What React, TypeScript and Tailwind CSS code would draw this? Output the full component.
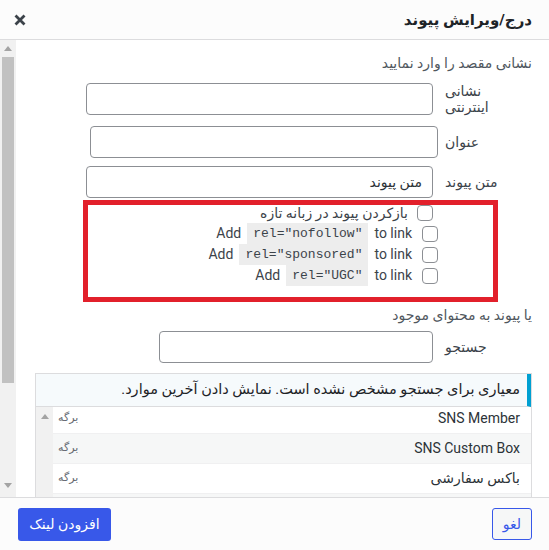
import React from "react";

const Checkbox = () => (
  <span className="block w-[16px] h-[16px] shrink-0 rounded-[4px] border border-[#8c8f94] bg-white" />
);

const Code = ({ children }: { children: React.ReactNode }) => (
  <span
    dir="ltr"
    className="h-[21px] flex items-center px-[6px] bg-[#ededed] text-[13px] text-[#3c434a] font-['Liberation_Mono',monospace] whitespace-pre"
  >
    {children}
  </span>
);

const RelRow = ({ rel }: { rel: string }) => (
  <div className="h-[21px] flex items-center pr-[94px]">
    <Checkbox />
    <span dir="ltr" className="mr-[10px] ml-[6px] text-[14px] text-[#3c434a]">
      to link
    </span>
    <Code>{`rel="${rel}"`}</Code>
    <span dir="ltr" className="mr-[6px] text-[14px] text-[#3c434a]">
      Add
    </span>
  </div>
);

const ListRow = ({ title, gray }: { title: string; gray?: boolean }) => (
  <div
    className={
      gray
        ? "h-[30px] shrink-0 flex items-center justify-between border-b border-[#f0f0f1] bg-[#f6f7f7]"
        : "h-[30px] shrink-0 flex items-center justify-between border-b border-[#f0f0f1] bg-white"
    }
  >
    <span className="pr-[11px] text-[14px] text-[#2c3338]">{title}</span>
    <span className="pl-[5px] text-[11px] text-[#646970]">برگه</span>
  </div>
);

const UpArrow = () => (
  <svg width="8" height="5" viewBox="0 0 8 5">
    <path d="M4 0 L8 5 L0 5 Z" fill="#a3a3a3" />
  </svg>
);
const DownArrow = () => (
  <svg width="8" height="5" viewBox="0 0 8 5">
    <path d="M0 0 L8 0 L4 5 Z" fill="#a3a3a3" />
  </svg>
);

export default function App() {
  return (
    <div
      dir="rtl"
      className="w-[549px] h-[550px] bg-white overflow-hidden flex flex-col font-[Roboto,'DejaVu_Sans',sans-serif] text-[#3c434a]"
    >
      {/* Header */}
      <div className="h-[40px] shrink-0 border-b border-[#dcdcde] bg-[#fcfcfc] flex items-center justify-between pr-[17px] pl-[14px]">
        <span className="text-[15px] font-bold text-[#1d2327] leading-[20px]">درج/ویرایش پیوند</span>
        <svg width="12" height="12" viewBox="0 0 12 12">
          <path d="M1.5 1.5 L10.5 10.5 M10.5 1.5 L1.5 10.5" stroke="#3c434a" strokeWidth="2.8" />
        </svg>
      </div>

      {/* Body */}
      <div className="h-[457px] shrink-0 flex overflow-hidden relative">
        <div className="flex-1 flex flex-col pr-[17px]">
          <p className="mt-[13px] leading-[20px] text-[14px] text-[#50575e]">نشانی مقصد را وارد نمایید</p>

          <div className="mt-[10px] flex items-center gap-[12px]">
            <div className="w-[87px] text-left text-[14px] leading-[16px] text-[#3c434a]">
              نشانی
              <br />
              اینترنتی
            </div>
            <div className="w-[347px] h-[32px] rounded-[4px] border border-[#8c8f94] bg-white" />
          </div>

          <div className="mt-[11px] flex items-center gap-[7px]">
            <div className="w-[87px] text-left text-[14px] text-[#3c434a]">عنوان</div>
            <div className="w-[348px] h-[32px] rounded-[4px] border border-[#8c8f94] bg-white" />
          </div>

          <div className="mt-[8px] flex items-center gap-[12px]">
            <div className="w-[87px] text-left text-[14px] text-[#3c434a]">متن پیوند</div>
            <div className="w-[347px] h-[32px] rounded-[4px] border border-[#8c8f94] bg-white flex items-center pr-[10px] text-[14px] text-[#2c3338]">
              متن پیوند
            </div>
          </div>

          <div className="mt-[5px] flex flex-col">
            <div className="h-[20px] flex items-center pr-[99px]">
              <Checkbox />
              <span className="mr-[9px] text-[14px] text-[#3c434a]">بازکردن پیوند در زبانه تازه</span>
            </div>
            <RelRow rel="nofollow" />
            <RelRow rel="sponsored" />
            <RelRow rel="UGC" />
          </div>

          <p className="mt-[19px] leading-[20px] text-[14px] text-[#50575e]">یا پیوند به محتوای موجود</p>

          <div className="mt-[6px] flex items-center gap-[12px]">
            <div className="w-[87px] text-left text-[14px] text-[#3c434a]">جستجو</div>
            <div className="w-[274px] h-[32px] rounded-[4px] border border-[#8c8f94] bg-white" />
          </div>

          <div className="mt-[10px] ml-[19px] border border-[#dcdcde] flex flex-col">
            <div className="h-[33px] shrink-0 flex items-center bg-[#f6fafc] border-r-4 border-r-[#00a0d2] border-b border-b-[#dcdcde] pr-[7px] text-[14.5px] text-[#1d2327]">
              معیاری برای جستجو مشخص نشده است. نمایش دادن آخرین موارد.
            </div>
            <div className="flex h-[120px] overflow-hidden">
              <div className="flex-1 flex flex-col -mt-[3px]">
                <ListRow title="SNS Member" />
                <ListRow title="SNS Custom Box" gray />
                <ListRow title="باکس سفارشی" />
                <ListRow title="درباره ما" gray />
              </div>
              <div className="w-[17px] shrink-0 bg-[#f1f1f1] flex justify-center pt-[7px]">
                <UpArrow />
              </div>
            </div>
          </div>
        </div>

        {/* Left scrollbar */}
        <div className="w-[16px] shrink-0 bg-[#f1f1f1] flex flex-col items-center">
          <div className="h-[17px] flex items-center justify-center">
            <UpArrow />
          </div>
          <div className="w-[12px] h-[326px] bg-[#c1c1c1]" />
          <div className="flex-1" />
          <div className="h-[14px] flex items-start justify-center">
            <DownArrow />
          </div>
        </div>

        {/* Red highlight annotation */}
        <div className="absolute left-[83px] top-[160px] w-[415px] h-[102px] border-[5px] border-[#e2202b] pointer-events-none" />
      </div>

      {/* Footer */}
      <div className="h-[53px] shrink-0 border-t border-[#dcdcde] bg-[#fcfcfc] flex items-start justify-between pt-[10px] pr-[17px] pl-[18px]">
        <button className="w-[40px] h-[32px] p-0 rounded-[3px] border border-[#3858e9] bg-[#f6f7f7] text-[#3858e9] text-[14px] leading-[30px] text-center">
          لغو
        </button>
        <button className="w-[93px] h-[33px] p-0 rounded-[3px] bg-[#3858e9] text-white text-[14px] leading-[33px] text-center">
          افزودن لینک
        </button>
      </div>
    </div>
  );
}
